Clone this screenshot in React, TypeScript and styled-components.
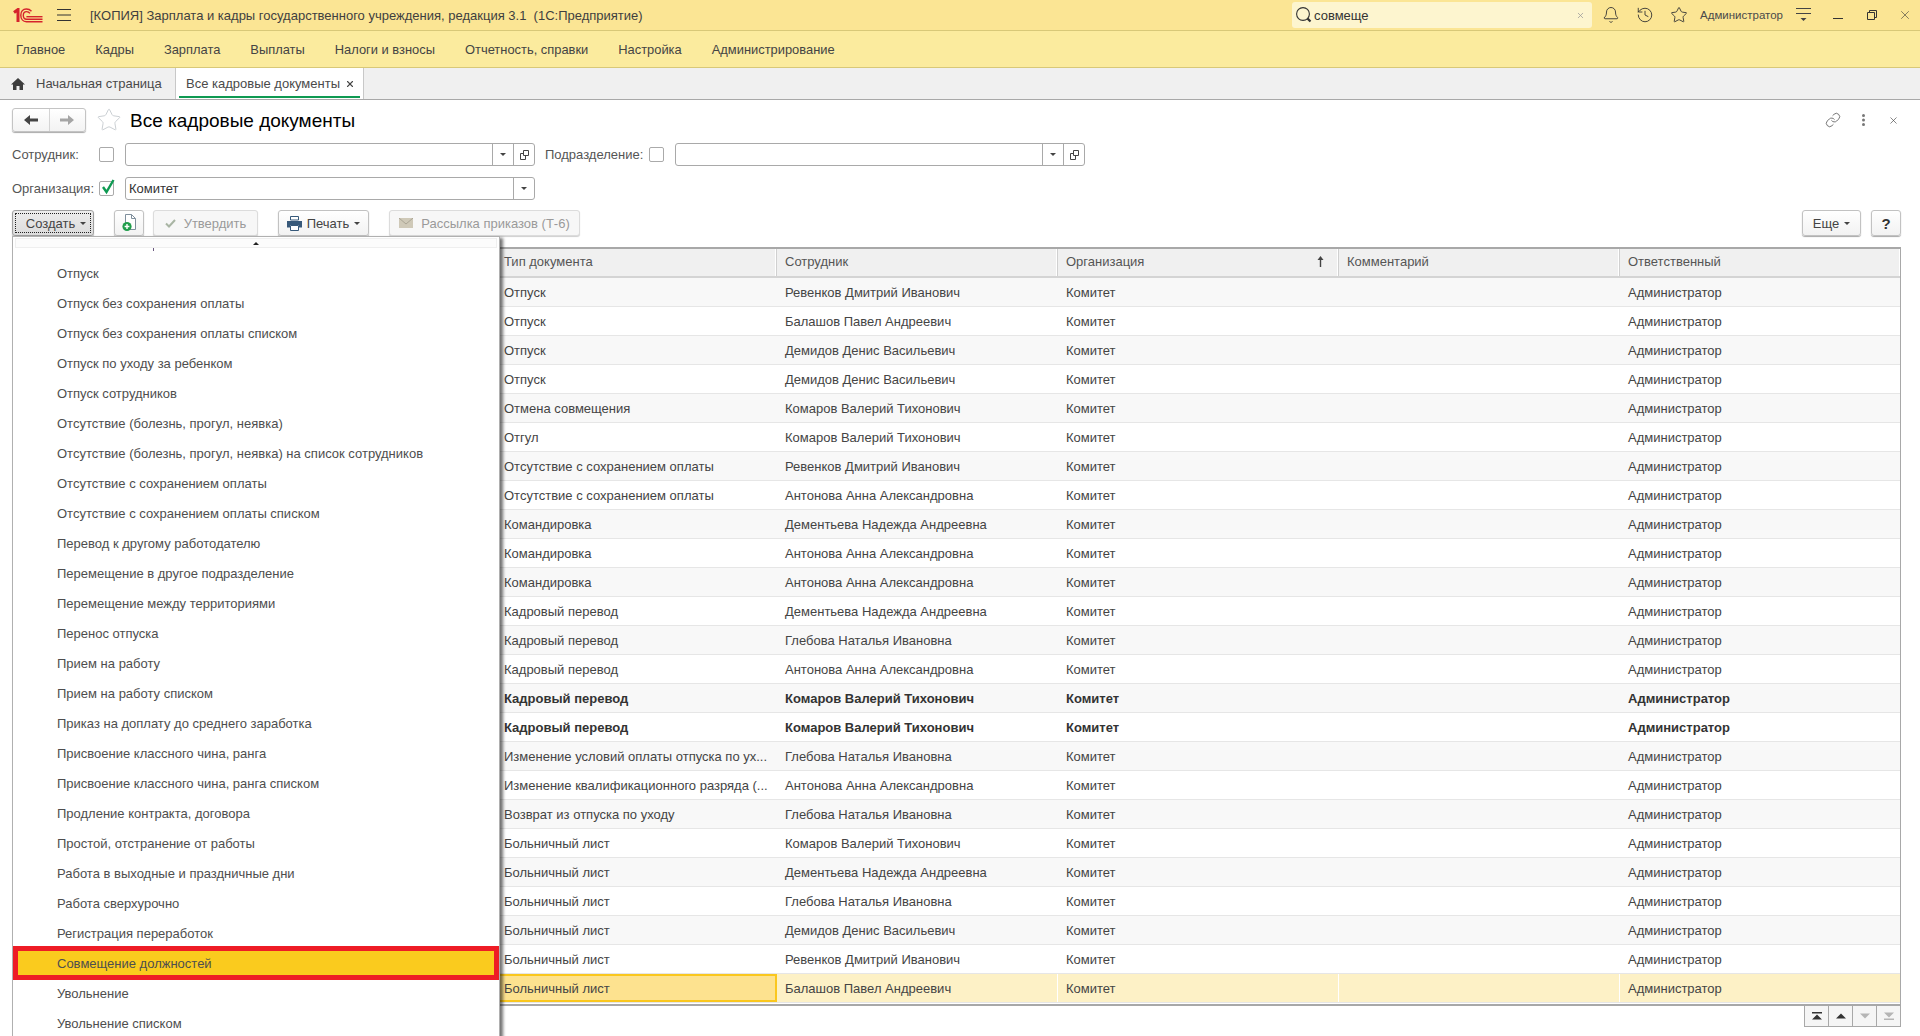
import React from "react";
import styled, { createGlobalStyle, css } from "styled-components";
import { Bell, History, Star, X, Link as LinkIcon } from "lucide-react";

const Global = createGlobalStyle`
  html, body { margin: 0; padding: 0; height: 100%; overflow: hidden; background: #fff; }
  body { font-family: "Liberation Sans", Arial, sans-serif; font-size: 13px; color: #4a4a4a; }
  #root { height: 100%; }
  * { box-sizing: border-box; }
`;

const Shell = styled.div`
  position: relative;
  height: 1036px;
  display: flex;
  flex-direction: column;
  overflow: hidden;
`;

/* ---------- title bar ---------- */
const TitleBar = styled.header`
  flex: none;
  height: 31px;
  display: flex;
  align-items: center;
  background: #fbe594;
  border-bottom: 1px solid #d8c878;
`;
const Logo = styled.svg`
  margin-left: 13px;
  flex: none;
`;
const Burger = styled.svg`
  margin-left: 14px;
  flex: none;
`;
const AppTitle = styled.div`
  margin-left: 19px;
  flex: 1;
  font-size: 13px;
  color: #3f3f3f;
  white-space: pre;
`;
const Search = styled.div`
  flex: none;
  width: 300px;
  height: 26px;
  display: flex;
  align-items: center;
  padding: 0 7px 0 3px;
  gap: 1px;
  background: #fdf5cf;
  border-radius: 3px;
  color: #333;
`;
const SearchText = styled.span`
  flex: 1;
`;
const Slot = styled.div<{ $w: number }>`
  flex: none;
  width: ${(p) => p.$w}px;
  height: 30px;
  display: flex;
  align-items: center;
  justify-content: center;
  color: #333;
`;
const UserName = styled.div`
  flex: none;
  width: 90px;
  padding-left: 4px;
  font-size: 11.5px;
  color: #4a4a4a;
`;
const SearchGap = styled.div`
  flex: none;
  width: 2px;
`;

/* ---------- menu bar ---------- */
const MenuBar = styled.nav`
  flex: none;
  height: 37px;
  display: flex;
  align-items: center;
  gap: 30px;
  padding: 1px 0 0 16px;
  background: #fbeb9e;
  border-bottom: 1px solid #d8c878;
  font-size: 12.9px;
  color: #444;
`;

/* ---------- tabs ---------- */
const TabBar = styled.div`
  flex: none;
  height: 32px;
  display: flex;
  background: #f0f0f0;
  border-bottom: 1px solid #a8a8a8;
`;
const HomeTab = styled.div`
  flex: none;
  width: 176px;
  display: flex;
  align-items: center;
  gap: 11px;
  padding-left: 11px;
  border-right: 1px solid #c8c8c8;
`;
const ActiveTab = styled.div`
  position: relative;
  flex: none;
  width: 188px;
  display: flex;
  align-items: center;
  justify-content: space-between;
  padding: 0 8px 0 10px;
  background: #fff;
  border-right: 1px solid #c8c8c8;
  &::after {
    content: "";
    position: absolute;
    left: 3px;
    right: 3px;
    bottom: 1px;
    height: 2px;
    background: #0f9a52;
  }
`;

/* ---------- form ---------- */
const Form = styled.main`
  flex: 1;
  min-height: 0;
  display: flex;
  flex-direction: column;
  padding: 8px 19px 9px 12px;
`;
const HeadRow = styled.div`
  flex: none;
  height: 24px;
  display: flex;
  align-items: center;
`;
const NavGroup = styled.div`
  flex: none;
  width: 74px;
  height: 24px;
  display: flex;
  border: 1px solid #c4c4c4;
  border-radius: 3px;
  background: linear-gradient(#fff, #f3f3f3);
  box-shadow: 0 1px 1px #aaa;
`;
const NavCell = styled.div`
  flex: 1;
  display: flex;
  align-items: center;
  justify-content: center;
  & + & {
    border-left: 1px solid #d4d4d4;
  }
`;
const FavStar = styled.div`
  flex: none;
  margin-left: 10px;
  width: 26px;
  display: flex;
  color: #c9ced2;
`;
const PageTitle = styled.h1`
  flex: 1;
  margin: 1px 0 0 8px;
  font-size: 19px;
  font-weight: 400;
  color: #000;
`;
const HeadAction = styled.div<{ $w: number; $gap?: number }>`
  flex: none;
  width: ${(p) => p.$w}px;
  margin-left: ${(p) => p.$gap ?? 0}px;
  display: flex;
  justify-content: center;
  color: #444;
`;

const FilterRow = styled.div`
  flex: none;
  height: 23px;
  margin-top: 11px;
  display: flex;
  align-items: center;
`;
const FilterLabel = styled.label<{ $w: number; $gap?: number }>`
  flex: none;
  width: ${(p) => p.$w}px;
  margin-left: ${(p) => p.$gap ?? 0}px;
  color: #555;
`;
const Box = styled.span`
  position: relative;
  flex: none;
  width: 15px;
  height: 15px;
  margin-right: 11px;
  border: 1px solid #aaa;
  border-radius: 2px;
  background: #fff;
`;
const Tick = styled.svg`
  position: absolute;
  left: 1px;
  top: -4px;
`;
const Field = styled.div`
  flex: none;
  width: 410px;
  height: 23px;
  display: flex;
  border: 1px solid #a9a9a9;
  border-radius: 3px;
  background: #fff;
`;
const FieldText = styled.div`
  flex: 1;
  padding: 0 3px;
  line-height: 21px;
  color: #333;
`;
const FieldBtn = styled.div`
  flex: none;
  width: 21px;
  display: flex;
  align-items: center;
  justify-content: center;
  border-left: 1px solid #a9a9a9;
`;

/* ---------- command bar ---------- */
const Toolbar = styled.div`
  flex: none;
  height: 26px;
  margin-top: 10px;
  display: flex;
  align-items: stretch;
`;
const Btn = styled.div<{ $w: number; $gap?: number; $off?: boolean; $pressed?: boolean }>`
  position: relative;
  flex: none;
  width: ${(p) => p.$w}px;
  margin-left: ${(p) => p.$gap ?? 0}px;
  display: flex;
  align-items: center;
  justify-content: center;
  gap: 5px;
  border: 1px solid #c2c2c2;
  border-radius: 3px;
  background: linear-gradient(#fff, #f2f2f2);
  box-shadow: 0 1px 1px #a8a8a8;
  color: #444;
  white-space: nowrap;
  ${(p) =>
    p.$off &&
    css`
      gap: 8px;
      color: #9a9a9a;
      border-color: #dcdcdc;
      background: #f7f7f7;
      box-shadow: 0 1px 1px #cfcfcf;
    `}
  ${(p) =>
    p.$pressed &&
    css`
      padding-left: 6px;
      background: linear-gradient(#ececec, #dcdcdc);
      border-color: #a0a0a0;
      &::before {
        content: "";
        position: absolute;
        inset: 2px;
        border: 1px dotted #222;
      }
    `}
`;
const Spacer = styled.div`
  flex: 1;
`;
const Caret = styled.span<{ $up?: boolean }>`
  display: inline-block;
  width: 0;
  height: 0;
  border-left: 3px solid transparent;
  border-right: 3px solid transparent;
  ${(p) => (p.$up ? "border-bottom: 3px solid #222;" : "border-top: 3px solid #444;")}
`;
const Help = styled.span`
  font-size: 15px;
  font-weight: 700;
  color: #333;
`;

/* ---------- list ---------- */
const Table = styled.section`
  flex: 1;
  min-height: 0;
  margin-top: 11px;
  border: 1px solid #a8a8a8;
  border-width: 2px 1px 2px 0;
  display: flex;
  flex-direction: column;
  overflow: hidden;
`;
const cols = "484px 281px 281px 281px 281px 1fr";
const HeadRowT = styled.div`
  flex: none;
  height: 29px;
  display: grid;
  grid-template-columns: ${cols};
  background: #f0f0f0;
  border-bottom: 2px solid #d4d4d4;
`;
const HeadCell = styled.div`
  display: flex;
  align-items: center;
  justify-content: space-between;
  padding: 0 14px 2px 8px;
  border-right: 1px solid #d0d0d0;
  box-shadow: inset -1px 0 0 #fff;
  color: #555;
  &:last-child {
    border-right: 0;
  }
`;
const Row = styled.div<{ $odd: boolean; $sel?: boolean; $bold?: boolean }>`
  flex: none;
  height: 29px;
  display: grid;
  grid-template-columns: ${cols};
  align-items: stretch;
  border-bottom: 1px solid #e6e6e6;
  background: ${(p) => (p.$sel ? "#fdf1c6" : p.$odd ? "#f8f8f8" : "#fff")};
  color: ${(p) => (p.$bold ? "#333" : "#444")};
  font-weight: ${(p) => (p.$bold ? 700 : 400)};
`;
const Cell = styled.div<{ $active?: boolean; $sel?: boolean }>`
  display: flex;
  align-items: center;
  padding: 0 8px;
  min-width: 0;
  overflow: hidden;
  white-space: nowrap;
  ${(p) => p.$sel && "border-right: 1px solid #fff;"}
  ${(p) =>
    p.$active &&
    css`
      padding: 0 6px;
      background: #fde28f;
      border: 2px solid #fac71e;
    `}
`;

const Pager = styled.div`
  flex: none;
  align-self: flex-end;
  height: 21px;
  width: 97px;
  display: flex;
  border: 1px solid #a8a8a8;
  border-top: 0;
`;
const PagerBtn = styled.div`
  flex: 1;
  display: flex;
  align-items: center;
  justify-content: center;
  background: #f5f5f5;
  & + & {
    border-left: 1px solid #a8a8a8;
  }
`;

/* ---------- create menu ---------- */
const Popup = styled.div`
  position: absolute;
  left: 12px;
  top: 236px;
  width: 488px;
  bottom: -10px;
  background: #fff;
  border: 1px solid #b0b0b0;
  box-shadow: 3px 2px 3px rgba(0, 0, 0, 0.55);
  display: flex;
  flex-direction: column;
  overflow: hidden;
`;
const ScrollUp = styled.div`
  flex: none;
  height: 10px;
  margin: 1px 2px 0;
  display: flex;
  align-items: center;
  justify-content: center;
  border: 1px solid #efefef;
  background: #fcfcfc;
`;
const ClippedTick = styled.div`
  flex: none;
  width: 1px;
  height: 3px;
  margin-left: 140px;
  background: #6c5a80;
`;
const MenuItem = styled.div`
  flex: none;
  height: 30px;
  display: flex;
  align-items: center;
  padding-left: 44px;
  color: #4e4e4e;
`;
const HotItem = styled(MenuItem)`
  height: 34px;
  margin: -2px 0;
  padding-left: 39px;
  background: #facb1e;
  border: 5px solid #ee1c25;
  position: relative;
`;
const FirstGap = styled.div`
  flex: none;
  height: 7px;
`;

/* ---------- drawings ---------- */
const LogoMark = () => (
  <Logo width="30" height="15" viewBox="0 0 30 15" fill="none" stroke="#d5232c">
    <path d="M1 4.5 L5 1.5 V14" strokeWidth="3" />
    <path d="M18.5 3.2 C17 1.6 15 1 13.3 1 C9.9 1 7.8 3.8 7.8 7.2 C7.8 10.8 10 13.7 13.4 13.7 H29.5" strokeWidth="1.4" />
    <path d="M17 5.4 C16.2 4.3 15 3.6 13.6 3.6 C11.6 3.6 10.3 5.2 10.3 7.2 C10.3 9.4 11.6 11.2 13.6 11.2 H29.5" strokeWidth="1.4" />
    <path d="M13.4 8.7 H29.5" strokeWidth="1.4" />
  </Logo>
);
const SearchGlass = () => (
  <svg width="18" height="18" viewBox="0 0 18 18" fill="none" stroke="#333">
    <circle cx="8" cy="8" r="6.4" strokeWidth="1.1" />
    <path d="M12.6 12.6 L15.5 15.5" strokeWidth="2.2" />
  </svg>
);
const HomeGlyph = () => (
  <svg width="14" height="12" viewBox="0 0 14 12" fill="#3d3d3d">
    <path d="M7 0 L14 6.4 H12 V12 H8.5 V8 H5.5 V12 H2 V6.4 H0 Z" />
  </svg>
);
const Arrow = ({ color, flip }: { color: string; flip?: boolean }) => (
  <svg width="14" height="10" viewBox="0 0 14 10" fill={color} transform={flip ? "scale(-1 1)" : undefined}>
    <path d="M0 5 L6 0 V3.4 H14 V6.6 H6 V10 Z" />
  </svg>
);
const CopyGlyph = () => (
  <svg width="9" height="10" viewBox="0 0 9 10" fill="none" stroke="#444">
    <path d="M3.5 .5 H8.5 V5.5 H3.5 Z M3.5 3.5 H.5 V9.5 H5.5 V5.5" />
  </svg>
);
const AddDoc = () => (
  <svg width="14" height="18" viewBox="0 0 14 18" fill="none">
    <path d="M3.5 .5 H9.5 L13.5 4.5 V15.5 H3.5 Z" fill="#fff" stroke="#7f8f9c" />
    <path d="M9.5 .5 V4.5 H13.5" stroke="#7f8f9c" />
    <circle cx="5" cy="12.5" r="4.6" fill="#1f9d4a" />
    <path d="M2.6 12.5 H7.4 M5 10.1 V14.9" stroke="#fff" strokeWidth="1.4" />
  </svg>
);
const CheckOff = () => (
  <svg width="11" height="9" viewBox="0 0 11 9" fill="none" stroke="#a9b5a4" strokeWidth="2">
    <path d="M1 4.5 L4 7.5 L10 1" />
  </svg>
);
const PrintGlyph = () => (
  <svg width="15" height="15" viewBox="0 0 15 15">
    <path d="M3.5 .5 H11.5 V4 H3.5 Z" fill="#fff" stroke="#37597a" />
    <path d="M0 5 H15 V11.5 H12 V9 H3 V11.5 H0 Z" fill="#37597a" />
    <path d="M3.5 9.5 H11.5 V14.5 H3.5 Z" fill="#fff" stroke="#37597a" />
  </svg>
);
const Envelope = () => (
  <svg width="14" height="10" viewBox="0 0 14 10">
    <rect width="14" height="10" fill="#cfc9b8" />
    <path d="M0 0 L7 6 L14 0" fill="none" stroke="#aaa595" />
  </svg>
);
const SortUp = () => (
  <svg width="7" height="11" viewBox="0 0 7 11" fill="#444">
    <path d="M3.5 0 L6.5 4 H4.2 V11 H2.8 V4 H.5 Z" />
  </svg>
);
const Tri = ({ up, color, cap }: { up?: boolean; color: string; cap?: boolean }) => (
  <svg width="12" height="8" viewBox="0 0 12 8" fill={color}>
    {up ? <path d={cap ? "M1 7.5 L6 2.5 L11 7.5 Z M1 0 H11 V1.4 H1 Z" : "M1 6.5 L6 1.5 L11 6.5 Z"} /> : <path d={cap ? "M1 .5 L6 5.5 L11 .5 Z M1 6.6 H11 V8 H1 Z" : "M1 1.5 L6 6.5 L11 1.5 Z"} />}
  </svg>
);

const menuItems = [
  "Главное",
  "Кадры",
  "Зарплата",
  "Выплаты",
  "Налоги и взносы",
  "Отчетность, справки",
  "Настройка",
  "Администрирование",
];

const popupItems = [
  "Отпуск",
  "Отпуск без сохранения оплаты",
  "Отпуск без сохранения оплаты списком",
  "Отпуск по уходу за ребенком",
  "Отпуск сотрудников",
  "Отсутствие (болезнь, прогул, неявка)",
  "Отсутствие (болезнь, прогул, неявка) на список сотрудников",
  "Отсутствие с сохранением оплаты",
  "Отсутствие с сохранением оплаты списком",
  "Перевод к другому работодателю",
  "Перемещение в другое подразделение",
  "Перемещение между территориями",
  "Перенос отпуска",
  "Прием на работу",
  "Прием на работу списком",
  "Приказ на доплату до среднего заработка",
  "Присвоение классного чина, ранга",
  "Присвоение классного чина, ранга списком",
  "Продление контракта, договора",
  "Простой, отстранение от работы",
  "Работа в выходные и праздничные дни",
  "Работа сверхурочно",
  "Регистрация переработок",
  "Совмещение должностей",
  "Увольнение",
  "Увольнение списком",
];

const P = {
  rev: "Ревенков Дмитрий Иванович",
  bal: "Балашов Павел Андреевич",
  dem: "Демидов Денис Васильевич",
  kom: "Комаров Валерий Тихонович",
  ant: "Антонова Анна Александровна",
  ded: "Дементьева Надежда Андреевна",
  gle: "Глебова Наталья Ивановна",
};

const rows: [string, string, boolean?][] = [
  ["Отпуск", P.rev],
  ["Отпуск", P.bal],
  ["Отпуск", P.dem],
  ["Отпуск", P.dem],
  ["Отмена совмещения", P.kom],
  ["Отгул", P.kom],
  ["Отсутствие с сохранением оплаты", P.rev],
  ["Отсутствие с сохранением оплаты", P.ant],
  ["Командировка", P.ded],
  ["Командировка", P.ant],
  ["Командировка", P.ant],
  ["Кадровый перевод", P.ded],
  ["Кадровый перевод", P.gle],
  ["Кадровый перевод", P.ant],
  ["Кадровый перевод", P.kom, true],
  ["Кадровый перевод", P.kom, true],
  ["Изменение условий оплаты отпуска по ух...", P.gle],
  ["Изменение квалификационного разряда (...", P.ant],
  ["Возврат из отпуска по уходу", P.gle],
  ["Больничный лист", P.kom],
  ["Больничный лист", P.ded],
  ["Больничный лист", P.gle],
  ["Больничный лист", P.dem],
  ["Больничный лист", P.rev],
  ["Больничный лист", P.bal],
];

export default function App() {
  return (
    <Shell>
      <Global />
      <TitleBar>
        <LogoMark />
        <Burger width="14" height="12" viewBox="0 0 14 12" stroke="#333">
          <path d="M0 .5 H14 M0 6 H14 M0 11.5 H14" />
        </Burger>
        <AppTitle>[КОПИЯ] Зарплата и кадры государственного учреждения, редакция 3.1  (1С:Предприятие)</AppTitle>
        <Search>
          <SearchGlass />
          <SearchText>совмеще</SearchText>
          <X size={9} color="#999" strokeWidth={2} />
        </Search>
        <SearchGap />
        <Slot $w={34}><Bell size={18} strokeWidth={1.2} /></Slot>
        <Slot $w={34}><History size={18} strokeWidth={1.2} /></Slot>
        <Slot $w={34}><Star size={18} strokeWidth={1.2} /></Slot>
        <UserName>Администратор</UserName>
        <Slot $w={34}>
          <svg width="15" height="14" viewBox="0 0 15 14" fill="#444">
            <path d="M0 .5 H15 M0 5.5 H15" stroke="#444" />
            <path d="M4.5 10 H10.5 L7.5 13 Z" />
          </svg>
        </Slot>
        <Slot $w={35}>
          <svg width="10" height="10" viewBox="0 0 10 10" stroke="#333"><path d="M0 8.5 H10" /></svg>
        </Slot>
        <Slot $w={34}>
          <svg width="10" height="10" viewBox="0 0 10 10" fill="none" stroke="#333"><path d="M.5 2.5 H7.5 V9.5 H.5 Z M2.5 2.5 V.5 H9.5 V7.5 H7.5" /></svg>
        </Slot>
        <Slot $w={31}><X size={14} strokeWidth={1} /></Slot>
      </TitleBar>

      <MenuBar>
        {menuItems.map((m) => (
          <span key={m}>{m}</span>
        ))}
      </MenuBar>

      <TabBar>
        <HomeTab>
          <HomeGlyph />
          <span>Начальная страница</span>
        </HomeTab>
        <ActiveTab>
          <span>Все кадровые документы</span>
          <X size={10} strokeWidth={2.6} color="#444" />
        </ActiveTab>
      </TabBar>

      <Form>
        <HeadRow>
          <NavGroup>
            <NavCell><Arrow color="#444" /></NavCell>
            <NavCell><Arrow color="#a5a5a5" flip /></NavCell>
          </NavGroup>
          <FavStar><Star size={26} strokeWidth={0.9} /></FavStar>
          <PageTitle>Все кадровые документы</PageTitle>
          <HeadAction $w={30}><LinkIcon size={16} strokeWidth={1.1} /></HeadAction>
          <HeadAction $w={30}>
            <svg width="3" height="12" viewBox="0 0 3 12" fill="#777">
              <circle cx="1.5" cy="1.5" r="1.5" />
              <circle cx="1.5" cy="6" r="1.5" />
              <circle cx="1.5" cy="10.5" r="1.5" />
            </svg>
          </HeadAction>
          <HeadAction $w={16} $gap={7}><X size={11} strokeWidth={1.4} /></HeadAction>
        </HeadRow>

        <FilterRow>
          <FilterLabel $w={87}>Сотрудник:</FilterLabel>
          <Box />
          <Field>
            <FieldText />
            <FieldBtn><Caret /></FieldBtn>
            <FieldBtn><CopyGlyph /></FieldBtn>
          </Field>
          <FilterLabel $w={104} $gap={10}>Подразделение:</FilterLabel>
          <Box />
          <Field>
            <FieldText />
            <FieldBtn><Caret /></FieldBtn>
            <FieldBtn><CopyGlyph /></FieldBtn>
          </Field>
        </FilterRow>
        <FilterRow>
          <FilterLabel $w={87}>Организация:</FilterLabel>
          <Box>
            <Tick width="14" height="17" viewBox="0 0 14 17" fill="none" stroke="#0f9a52" strokeWidth="2.4">
              <path d="M2 9 L5.5 14 L12.5 2" />
            </Tick>
          </Box>
          <Field>
            <FieldText>Комитет</FieldText>
            <FieldBtn><Caret /></FieldBtn>
          </Field>
        </FilterRow>

        <Toolbar>
          <Btn $w={82} $pressed>Создать <Caret /></Btn>
          <Btn $w={30} $gap={20}><AddDoc /></Btn>
          <Btn $w={105} $gap={9} $off><CheckOff />Утвердить</Btn>
          <Btn $w={91} $gap={20}><PrintGlyph />Печать <Caret /></Btn>
          <Btn $w={191} $gap={20} $off><Envelope />Рассылка приказов (Т-6)</Btn>
          <Spacer />
          <Btn $w={59}>Еще <Caret /></Btn>
          <Btn $w={30} $gap={10}><Help>?</Help></Btn>
        </Toolbar>

        <Table>
          <HeadRowT>
            <HeadCell />
            <HeadCell>Тип документа</HeadCell>
            <HeadCell>Сотрудник</HeadCell>
            <HeadCell>Организация <SortUp /></HeadCell>
            <HeadCell>Комментарий</HeadCell>
            <HeadCell>Ответственный</HeadCell>
          </HeadRowT>
          {rows.map(([type, person, bold], i) => {
            const sel = i === rows.length - 1;
            return (
              <Row key={i} $odd={i % 2 === 0} $sel={sel} $bold={bold}>
                <Cell />
                <Cell $active={sel}>{type}</Cell>
                <Cell $sel={sel}>{person}</Cell>
                <Cell $sel={sel}>Комитет</Cell>
                <Cell $sel={sel} />
                <Cell>Администратор</Cell>
              </Row>
            );
          })}
        </Table>
        <Pager>
          <PagerBtn><Tri up cap color="#333" /></PagerBtn>
          <PagerBtn><Tri up color="#333" /></PagerBtn>
          <PagerBtn><Tri color="#b5b5b5" /></PagerBtn>
          <PagerBtn><Tri cap color="#b5b5b5" /></PagerBtn>
        </Pager>
      </Form>

      <Popup>
        <ScrollUp><Caret $up /></ScrollUp>
        <ClippedTick />
        <FirstGap />
        {popupItems.map((t) =>
          t === "Совмещение должностей" ? <HotItem key={t}>{t}</HotItem> : <MenuItem key={t}>{t}</MenuItem>
        )}
      </Popup>
    </Shell>
  );
}
